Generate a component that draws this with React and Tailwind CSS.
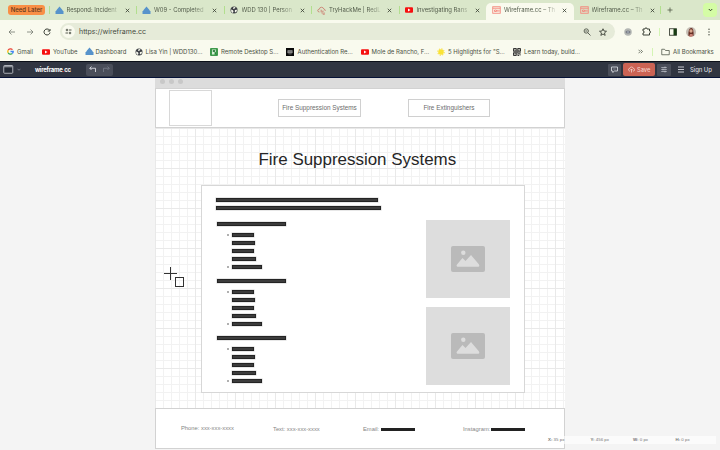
import React from 'react';

const House = () => (
  <svg className="h-[9px] w-[9px] shrink-0" viewBox="0 0 18 18">
    <path d="M9 1 L14.5 7.5 V10 H3.5 V7.5Z M1 10.5 H17 V16 H1Z" fill="#5793cb" />
    <path d="M3.5 8 H14.5 L17 12 H1Z" fill="#5793cb" />
  </svg>
);
const Globe = () => (
  <svg className="h-[8px] w-[8px] shrink-0" viewBox="0 0 16 16">
    <circle cx="8" cy="8" r="7" fill="#3e4146" />
    <path d="M2 7 L6 8.5 7 11 5.5 14 Q1.5 11.5 2 7Z M8 2 L11 2.5 9.5 5 6.5 6 6 4Z M10 8 L14 7.5 13.5 10.5 11 13 9.5 11Z" fill="#f4f6ea" />
  </svg>
);
const YouTube = () => (
  <svg className="h-[8px] w-[8px] shrink-0" viewBox="0 0 16 16">
    <rect x="0" y="2.5" width="16" height="11" rx="2" fill="#f60f0f" />
    <path d="M6 5.2 L11 8 6 10.8Z" fill="#fff" />
  </svg>
);
const Cloud = () => (
  <svg className="h-[9px] w-[9px] shrink-0" viewBox="0 0 18 18" fill="none" stroke="#c9655b" strokeWidth="1.4">
    <path d="M5 12 H4 Q1 11 1.5 8.5 Q2 6.500 4.500 6.500 Q5 2.500 9 2.500 Q12.500 2.500 13.500 6 Q17 6.500 16.500 10" />
    <path d="M7 8.500h3M12 9v3M7 11.500h4M9 14h3M14 12.500v3.500M11.500 16.500h4" />
  </svg>
);
const Wire = () => (
  <svg className="h-[8px] w-[9px] shrink-0" viewBox="0 0 18 16" fill="none" stroke="#f4877c" strokeWidth="1.8">
    <rect x="1.500" y="1.500" width="15" height="13" />
    <path d="M1.500 4.500H16.500M5 8h4v3H5zM11.500 7.500v4M14 7.500v4" />
  </svg>
);
const Close = () => (
  <svg className="h-[5px] w-[5px] shrink-0" viewBox="0 0 10 10" stroke="#3e4639" strokeWidth="1.700">
    <path d="M1.500 1.500L8.500 8.500M8.500 1.500L1.500 8.500" />
  </svg>
);
const Google = () => (
  <svg className="h-[7px] w-[7px] shrink-0" viewBox="0 0 14 14" fill="none" strokeWidth="2.600">
    <path d="M2.300 4.500A5.400 5.400 0 0 1 11 3.300" stroke="#ea4335" />
    <path d="M2.300 4.500A5.400 5.400 0 0 0 2.300 9.500" stroke="#fbbc05" />
    <path d="M2.300 9.500A5.400 5.400 0 0 0 10.600 11" stroke="#34a853" />
    <path d="M7 7h5.500Q12.400 9.500 10.600 11" stroke="#4285f4" />
  </svg>
);
const Remote = () => (
  <svg className="h-[8px] w-[8px] shrink-0" viewBox="0 0 16 16">
    <rect width="16" height="16" rx="2" fill="#3f9a4c" />
    <path d="M4 3h8v5H9v5H4z" fill="#d8efd6" />
    <path d="M6 5h4v2H6zM10 10l3 3" stroke="#267536" strokeWidth="1.500" fill="#54a65e" />
  </svg>
);
const Auth = () => (
  <svg className="h-[8px] w-[8px] shrink-0" viewBox="0 0 16 16">
    <rect width="16" height="16" fill="#090909" />
    <path d="M3.500 5h9v5h-9zM5 12h6" fill="#777" stroke="#aaa" />
  </svg>
);
const Sun = () => (
  <svg className="h-[8px] w-[8px] shrink-0" viewBox="0 0 16 16">
    <circle cx="8" cy="8" r="5.500" fill="#fae334" />
    <circle cx="8" cy="8" r="6.400" fill="none" stroke="#f8e04a" strokeWidth="2.200" strokeDasharray="2.500 2.500" />
  </svg>
);
const Qr = () => (
  <svg className="h-[8px] w-[8px] shrink-0" viewBox="0 0 16 16" fill="none" stroke="#222" strokeWidth="1.800">
    <path d="M1 1h5v5H1zM10 1h5v5h-5zM1 10h5v5H1zM8 0v16M0 8h16M10 10.500h5M11 13v3M14 12v3M3 3.500h1M12 3.500h1M3 12.500h1" />
  </svg>
);

const tabs = [
  [House, 'Respond: Incident'],
  [House, 'W09 - Completed'],
  [Globe, 'WDD 130 | Person'],
  [Cloud, 'TryHackMe | RedL'],
  [YouTube, 'Investigating Rans'],
  [Wire, 'Wireframe.cc – Th'],
  [Wire, 'Wireframe.cc – Th'],
];

const Tab = ({ Icon, label, index }) => (
  <div className={`relative flex w-[87.5px] shrink-0 items-center pl-[6px] ${index === 5 ? 'mt-[3px] h-[17px] rounded-t-[5px] bg-[#f9faee] pb-[3px]' : 'h-full'}`}>
    {index < 5 && <i className="absolute left-0 top-[6px] h-[8px] w-px bg-[#b2df8e]" />}
    <span className="flex w-[12px] shrink-0 items-center"><Icon /></span>
    <span className="w-[52px] whitespace-nowrap text-[5.900px] leading-[10px] text-[#515a49] [mask-image:linear-gradient(to_right,black_75%,rgba(0,0,0,0.150))]">{label}</span>
    <span className="ml-[6px] flex"><Close /></span>
  </div>
);

const bookmarks = [
  [Google, 'Gmail', 'w-[35px]', 'w-[10px]'],
  [YouTube, 'YouTube', 'w-[42.500px]', 'w-[11px]'],
  [House, 'Dashboard', 'w-[50.500px]', 'w-[11px]'],
  [Globe, 'Lisa Yin | WDD130...', 'w-[75px]', 'w-[10.500px]'],
  [Remote, 'Remote Desktop S...', 'w-[76px]', 'w-[11px]'],
  [Auth, 'Authentication Re...', 'w-[75px]', 'w-[11.500px]'],
  [YouTube, 'Mole de Rancho, F...', 'w-[76px]', 'w-[10.500px]'],
  [Sun, '5 Highlights for "S...', 'w-[76px]', 'w-[11px]'],
  [Qr, 'Learn today, build...', 'w-[123px]', 'w-[11px]'],
];

const Bar = ({ className }) => (
  <div className={`h-[4px] border border-[#242424] bg-[#3c3c3c] shadow-[0_0_0_0.500px_#d0d0d0] ${className}`} />
);

const Section = () => (
  <div className="h-[57px]">
    <Bar className="ml-px w-[69px]" />
    <div className="mt-[7px] flex flex-col gap-[4px] pl-[15.500px]">
      {['w-[22.500px]', 'w-[23.500px]', 'w-[22.500px]', 'w-[24.500px]', 'w-[30px]'].map((w, i) => (
        <div key={i} className="relative flex">
          {(i === 0 || i === 4) && <i className="absolute -left-[4.500px] top-px h-[2px] w-[2px] bg-[#b0b0b0]" />}
          <Bar className={w} />
        </div>
      ))}
    </div>
  </div>
);

const Placeholder = () => (
  <div className="flex h-[78px] w-[84.500px] items-center justify-center bg-[#dddddd]">
    <svg className="h-[26px] w-[34px]" viewBox="0 0 34 26">
      <rect width="34" height="26" rx="2" fill="#bababa" />
      <circle cx="12.300" cy="6.700" r="2.200" fill="#dddddd" />
      <path d="M6 20.500Q5 20 6 18.500L11.500 12 14.500 15 20 9 28 18.500Q29 20.500 27.500 20.700H6.500Z" fill="#dddddd" />
    </svg>
  </div>
);

export default function App() {
  return (
    <div className="flex h-[450px] w-[720px] flex-col overflow-hidden bg-[#f4f4f4] font-['Inter',sans-serif] text-[6px] leading-[10px]">
      <div className="flex h-[20px] shrink-0 bg-[#dae7ca]">
        <div className="w-[48.500px] shrink-0 pl-[8px] pt-[5px]">
          <div className="h-[10px] w-[37px] whitespace-nowrap rounded-[3px] bg-[#f98f45] text-center text-[6px] font-medium leading-[10px] text-[#59351b]">Need Later</div>
        </div>
        {tabs.map(([Icon, label], i) => <Tab key={i} Icon={Icon} label={label} index={i} />)}
        <div className="flex flex-1 items-center">
          <i className="-ml-px h-[8px] w-px bg-[#b2df8e]" />
          <svg className="ml-[6px] h-[6px] w-[6px]" viewBox="0 0 12 12" stroke="#48513e" strokeWidth="1.500"><path d="M6 1v10M1 6h10" /></svg>
          <span className="ml-auto mr-[3px] flex h-[14px] w-[14px] items-center justify-center rounded-[4px] bg-[#d4fca5]">
            <svg className="h-[4px] w-[5px]" viewBox="0 0 10 8" fill="none" stroke="#35402b" strokeWidth="2"><path d="M1.500 2L5 5.500 8.500 2" /></svg>
          </span>
        </div>
      </div>

      <div className="flex h-[23px] shrink-0 items-center bg-[#f9faee]">
        <div className="flex w-[60px] items-center pl-[7.500px]">
          <svg className="h-[8px] w-[8px]" viewBox="0 0 16 16" fill="none" stroke="#757a70" strokeWidth="1.600"><path d="M14 8H2M7 3L2 8l5 5" /></svg>
          <svg className="ml-[10px] h-[8px] w-[8px]" viewBox="0 0 16 16" fill="none" stroke="#757a70" strokeWidth="1.600"><path d="M2 8h12M9 3l5 5-5 5" /></svg>
          <svg className="ml-[9.500px] h-[8px] w-[8px]" viewBox="0 0 16 16" fill="none" stroke="#33382f" strokeWidth="2"><path d="M13 4.500A6 6 0 1 0 14 9M14 2v4h-4.500" /></svg>
        </div>
        <div className="flex h-[17px] w-[555px] items-center rounded-full bg-[#e6ebd9] pl-[2px] pr-[8px]">
          <span className="flex h-[13px] w-[13px] items-center justify-center rounded-full bg-[#f9faee]">
            <svg className="h-[7px] w-[7px]" viewBox="0 0 14 14" fill="none" stroke="#454a40" strokeWidth="1.800"><circle cx="4" cy="4" r="1.700" /><path d="M8 4h5M1 10h5" /><circle cx="10" cy="10" r="1.700" /></svg>
          </span>
          <span className="ml-[4px] text-[7px] text-[#454a40]">https://wireframe.cc</span>
          <svg className="ml-auto h-[8px] w-[8px]" viewBox="0 0 16 16" fill="none" stroke="#454a40" strokeWidth="1.700"><circle cx="6.500" cy="6" r="4.300" /><path d="M4.500 6h4M9.500 9.500L15 15" /></svg>
          <svg className="ml-[8px] h-[8px] w-[8px]" viewBox="0 0 16 16" fill="none" stroke="#34392f" strokeWidth="1.700"><path d="M8 1.500l2 4.500 5 .5-4 3.300 1.300 5L8 12l-4.300 2.800L5 9.800 1 6.500 6 6z" /></svg>
        </div>
        <svg className="ml-[9px] h-[8px] w-[8px]" viewBox="0 0 16 16"><circle cx="8" cy="8" r="7.500" fill="#b3b6b3" /><ellipse cx="8" cy="8" rx="5" ry="3" fill="#7b7f86" /><circle cx="8" cy="8" r="1.500" fill="#bfc5d8" /></svg>
        <svg className="ml-[10px] h-[9px] w-[9px]" viewBox="0 0 18 18" fill="none" stroke="#3b4036" strokeWidth="2"><path d="M2 4h4Q6 1.500 8 1.500T10 4h5v4q2 0 2 2T15 12v4H2v-4q2.500 0 2.500-2T2 8z" /></svg>
        <i className="ml-[8px] h-[8px] w-px bg-[#d4f5b4]" />
        <svg className="ml-[9px] h-[8px] w-[8px]" viewBox="0 0 16 16"><rect x="1" y="1.500" width="14" height="13" fill="none" stroke="#34392f" strokeWidth="1.700" /><path d="M9 1.500h6v13H9z" fill="#173d13" /></svg>
        <svg className="ml-[9px] h-[10px] w-[10px]" viewBox="0 0 20 20"><circle cx="10" cy="10" r="10" fill="#c6beb5" /><path d="M5 18Q4 3 10 2T15 18z" fill="#672f25" /><circle cx="10" cy="8" r="3.300" fill="#d9a78e" /><path d="M6 19l2-5h5l1 4-4 2z" fill="#c78075" /></svg>
        <svg className="ml-[11px] h-[8px] w-[4px]" viewBox="0 0 8 16" fill="#41463c"><circle cx="4" cy="2.500" r="1.400" /><circle cx="4" cy="8" r="1.400" /><circle cx="4" cy="13.500" r="1.400" /></svg>
      </div>

      <div className="flex h-[18px] shrink-0 items-center bg-[#f9faee] pb-px pl-[7px]">
        {bookmarks.map(([Icon, label, w, iw], i) => (
          <div key={i} className={`flex shrink-0 items-center whitespace-nowrap text-[#4a5043] ${w}`}>
            <span className={`flex shrink-0 items-center ${iw}`}><Icon /></span>
            <span>{label}</span>
          </div>
        ))}
        <svg className="ml-[2px] h-[5px] w-[5px] shrink-0" viewBox="0 0 10 10" fill="none" stroke="#444a3e" strokeWidth="1.400"><path d="M1 1.500L4.500 5 1 8.500M5.500 1.500L9 5 5.500 8.500" /></svg>
        <i className="ml-[9px] h-[8px] w-px shrink-0 bg-[#d4f5b4]" />
        <svg className="ml-[7.500px] h-[8px] w-[9px] shrink-0" viewBox="0 0 18 16" fill="none" stroke="#4a5043" strokeWidth="1.500"><path d="M1.500 13.500v-11H7l2 2.500h7.500v8.500z" /></svg>
        <span className="ml-[3.500px] whitespace-nowrap text-[#4a5043]">All Bookmarks</span>
      </div>

      <div className="flex h-[17px] shrink-0 items-center border-b border-t border-b-[#061237] border-t-[#0b0f18] bg-[#303541]">
        <svg className="ml-[3px] h-[9px] w-[11px]" viewBox="0 0 22 18"><rect x="1.500" y="1" width="18" height="15.500" rx="1.500" fill="#242a35" stroke="#c4c7cd" strokeWidth="1.700" /><path d="M2 3.500h17" stroke="#aeb2b9" strokeWidth="2" /></svg>
        <svg className="ml-[2.500px] h-[3px] w-[4px]" viewBox="0 0 8 6" fill="none" stroke="#8e939e" strokeWidth="1.300"><path d="M1 1.500l3 3 3-3" /></svg>
        <span className="ml-[14.500px] w-[51px] whitespace-nowrap text-[6px] font-bold tracking-[-0.270px] text-white">wireframe<span className="text-[#f12f2f]">.</span>cc</span>
        <div className="flex h-[12px] w-[27px] items-center rounded-[2px] bg-[#4a4e5a]">
          <svg className="ml-[3px] h-[7px] w-[8px]" viewBox="0 0 16 14" fill="none" stroke="#e1e3e8" strokeWidth="1.700"><path d="M5 1L1.500 4.500 5 8M1.500 4.500H13V12" /></svg>
          <svg className="ml-[5px] h-[7px] w-[8px]" viewBox="0 0 16 14" fill="none" stroke="#767b88" strokeWidth="1.700"><path d="M11 1l3.500 3.500L11 8M14.500 4.500H3V12" /></svg>
        </div>
        <div className="ml-auto mr-[8px] flex items-center">
          <span className="flex h-[12px] w-[13px] items-center justify-center rounded-[1px] bg-[#4a4e5a]">
            <svg className="h-[7px] w-[7px]" viewBox="0 0 14 14"><path d="M1 2h12v8H7l-3.500 3v-3H1z" fill="none" stroke="#d8dae0" strokeWidth="1.700" /><path d="M4 6h6" stroke="#d8dae0" strokeDasharray="1.500 1" /></svg>
          </span>
          <span className="ml-[2px] flex h-[13px] w-[32px] items-center rounded-[2px] bg-[#cc6354] pl-[4.500px] text-[5.700px] font-medium text-[#f3d0ca]">
            <svg className="mr-[2.500px] h-[7px] w-[7px]" viewBox="0 0 14 14" fill="none" stroke="#f3d7d2" strokeWidth="1.600"><path d="M4 10H3Q.8 9 1 7t2.300-2Q4 2 7 2t3.800 3Q13 5 13.200 7.300T11 10h-1M7 13V6M4.500 8.500L7 6l2.500 2.500" /></svg>Save
          </span>
          <span className="ml-[2px] flex h-[12px] w-[13.500px] items-center justify-center rounded-[1px] bg-[#4a4e5a]">
            <svg className="h-[7px] w-[6px]" viewBox="0 0 12 14" stroke="#c4c7ce" strokeWidth="1.400"><path d="M.5 3h11M.5 7h11M.5 11h11M8 1v4M4 5v4M8 9v4" /></svg>
          </span>
          <svg className="ml-[7.500px] h-[7px] w-[6px]" viewBox="0 0 12 14" stroke="#ced0d6" strokeWidth="1.900"><path d="M0 2h12M0 7h12M0 12h12" /></svg>
          <span className="ml-[6px] w-[22px] whitespace-nowrap text-[6px] font-medium tracking-[-0.100px] text-[#d7d9df]">Sign Up</span>
        </div>
      </div>

      <main className="relative h-[372px] pl-[155px] font-['Liberation_Sans',sans-serif]">
        <div className="h-[370px] w-[410px] bg-white">
          <div className="flex h-[10px] gap-[4px] bg-[#dcdcdc] pl-[5px] pt-px">
            <i className="h-[5px] w-[5px] rounded-full bg-[#c8c8c8]" />
            <i className="h-[5px] w-[5px] rounded-full bg-[#c8c8c8]" />
            <i className="h-[5px] w-[5px] rounded-full bg-[#c8c8c8]" />
          </div>
          <div className="flex h-[40px] border border-[#d2d2d2] bg-white pl-[13px] pt-px">
            <div className="h-[36px] w-[43px] border border-[#d8d8d8]" />
            <div className="ml-[66px] mt-[9px] h-[18px] w-[83px] whitespace-nowrap border border-[#d0d0d0] text-center text-[6.400px] leading-[16px] text-[#6c6c6c]">Fire Suppression Systems</div>
            <div className="ml-[47px] mt-[9px] h-[18px] w-[82px] whitespace-nowrap border border-[#d0d0d0] text-center text-[6.400px] leading-[16px] text-[#6c6c6c]">Fire Extinguishers</div>
          </div>
          <div className="h-[280px] bg-[linear-gradient(to_right,#e9e9e9_1px,transparent_1px),linear-gradient(to_bottom,#e9e9e9_1px,transparent_1px),linear-gradient(to_right,#f2f2f2_1px,transparent_1px),linear-gradient(to_bottom,#f2f2f2_1px,transparent_1px)] bg-[size:40px_40px,40px_40px,8px_8px,8px_8px]">
            <h1 className="h-[57px] pl-[103.500px] pt-[21px] text-[16.950px] leading-[22px] text-[#262626]"><span className="whitespace-nowrap">Fire Suppression Systems</span></h1>
            <div className="ml-[46px] flex h-[208px] w-[324px] justify-between border border-[#d7d7d7] bg-white pl-[14px] pr-[14px] pt-[12px]">
              <div>
                <Bar className="w-[162px]" />
                <Bar className="mt-[4px] w-[164.500px]" />
                <div className="mt-[12px]"><Section /><Section /><Section /></div>
              </div>
              <div className="flex flex-col gap-[9px] pt-[22px]"><Placeholder /><Placeholder /></div>
            </div>
          </div>
          <footer className="flex h-[40.500px] border border-[#d2d2d2] bg-white pl-[25px] pt-[14px] text-[5.800px] leading-[10px] text-[#858585]">
            <span className="w-[92px] whitespace-nowrap">Phone: xxx-xxx-xxxx</span>
            <span className="w-[90px] whitespace-nowrap pt-px">Text: xxx-xxx-xxxx</span>
            <span className="flex w-[100px] pt-px">Email:<i className="ml-[2px] mt-[4px] h-[3px] w-[34px] bg-[#222]" /></span>
            <span className="flex pt-px">Instagram:<i className="ml-px mt-[3.500px] h-[3px] w-[34px] bg-[#222]" /></span>
          </footer>
        </div>
        <svg className="absolute left-[164px] top-[188px] h-[22px] w-[22px]" viewBox="0 0 22 22" fill="none" stroke="#333"><path d="M6.500 1v13M0 7.500h13" /><rect x="11.500" y="11.500" width="8" height="9" /></svg>
        <div className="absolute left-[547px] top-[358px] flex h-[8px] w-[169px] bg-white/60 pl-[1px] text-[4.400px] leading-[8px] text-[#777]">
          <span className="w-[42.500px]"><b>X:</b> 35 px</span><span className="w-[42.500px]"><b>Y:</b> 456 px</span><span className="w-[42.500px]"><b>W:</b> 0 px</span><span><b>H:</b> 0 px</span>
        </div>
      </main>
    </div>
  );
}
